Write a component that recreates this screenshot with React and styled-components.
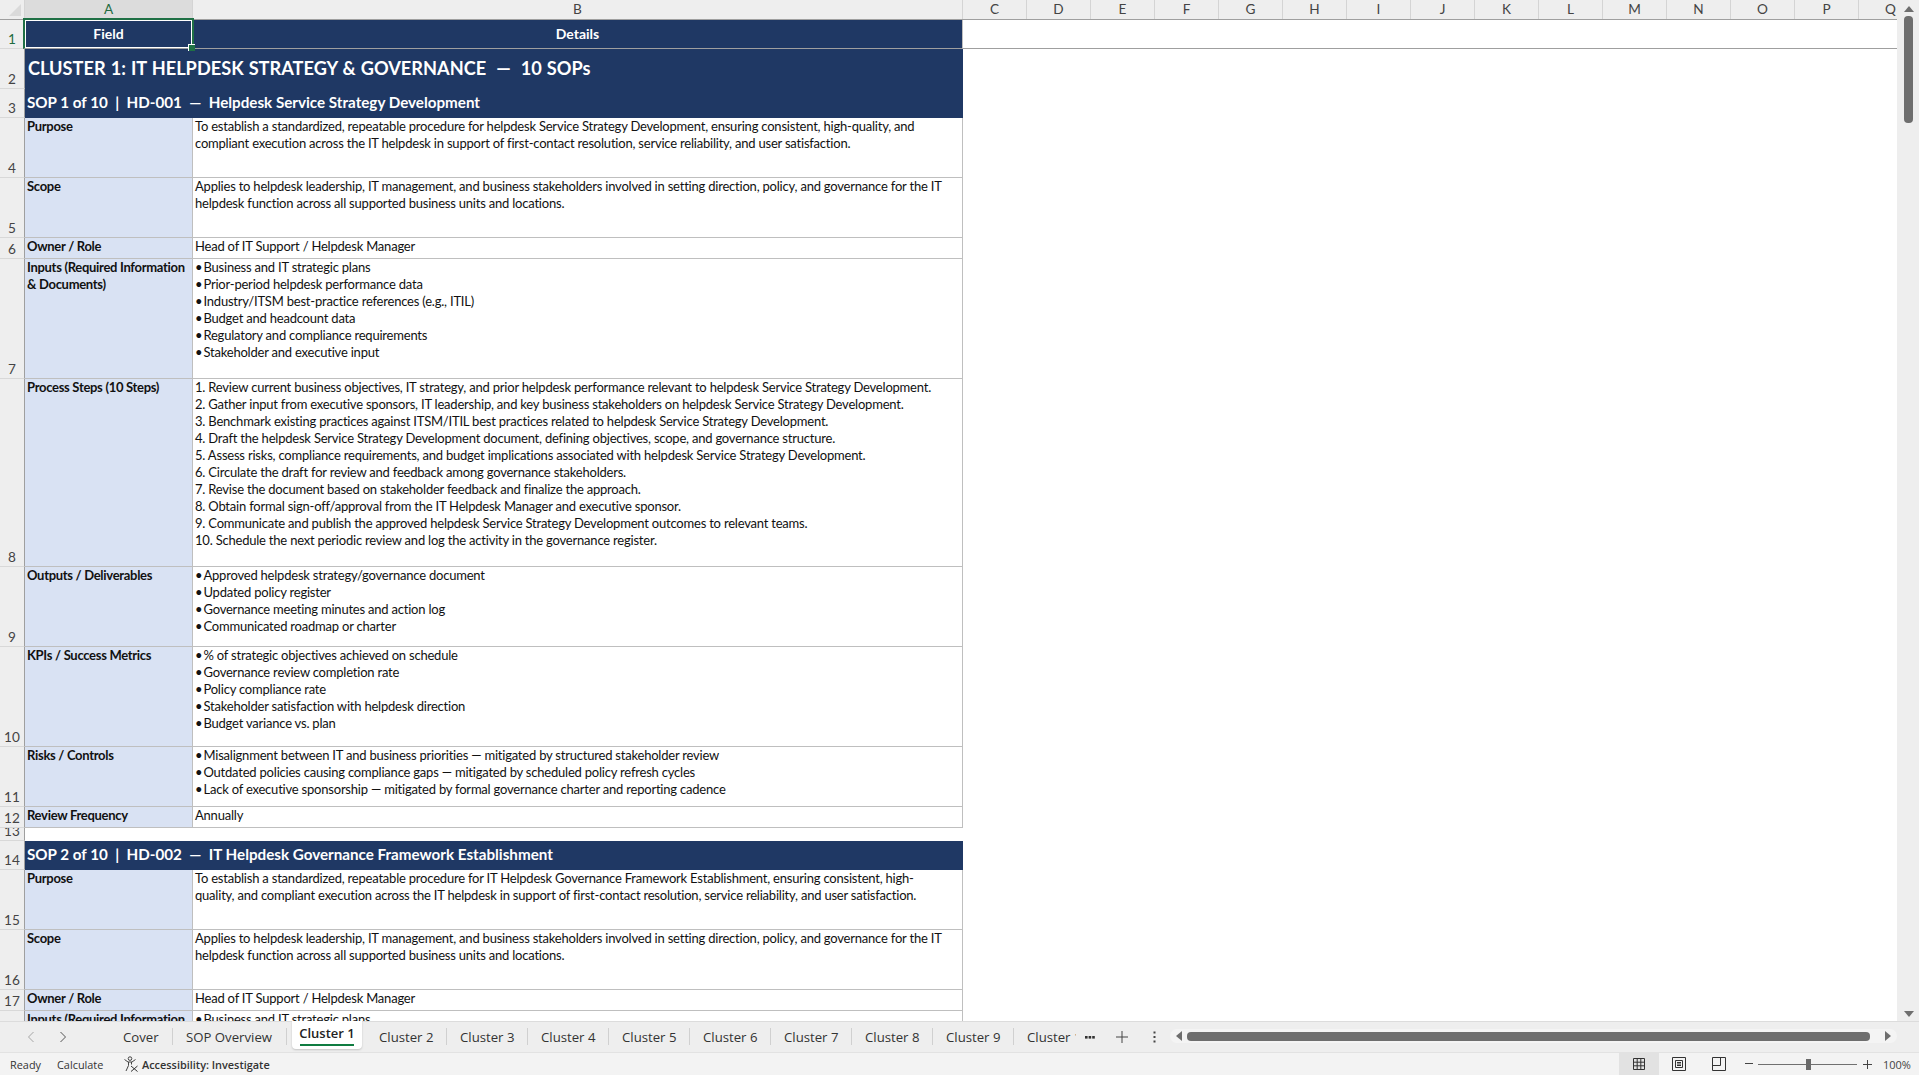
import React from 'react';
import styled, { createGlobalStyle } from 'styled-components';

const GlobalStyle = createGlobalStyle`
  html, body { margin: 0; padding: 0; height: 100%; overflow: hidden; background: #fff; }
  * { box-sizing: border-box; }
  #root { height: 100%; }
`;

const CELL_FONT = `Lato, "Liberation Sans", sans-serif`;
const UI_FONT = `"Open Sans", "Noto Sans", sans-serif`;
const NAVY = '#1f3864';
const LABEL_BG = '#d9e2f3';
const LINE = '#bfbfbf';

const Window = styled.div`
  display: flex;
  flex-direction: column;
  height: 1075px;
  width: 1919px;
  background: #f3f3f3;
`;

const Workspace = styled.div`
  display: flex;
  height: 1021px;
  flex: none;
`;

const SheetArea = styled.div`
  position: relative;
  width: 1897px;
  flex: none;
  display: flex;
  flex-direction: column;
  overflow: hidden;
  background: #fff;
  font-family: ${CELL_FONT};
  font-size: 13px;
  letter-spacing: -0.21px;
  line-height: 17px;
  color: #111;
`;

const ColumnBar = styled.div`
  display: flex;
  height: 20px;
  flex: none;
  background: #eeeeee;
  border-bottom: 1px solid #9f9f9f;
`;

const Corner = styled.div`
  width: 25px;
  flex: none;
  position: relative;
  border-right: 1px solid #d4d4d4;
  &::after {
    content: '';
    position: absolute;
    right: 3px;
    bottom: 3px;
    border-style: solid;
    border-width: 0 0 12px 12px;
    border-color: transparent transparent #dadada transparent;
  }
`;

const ColumnHead = styled.div`
  width: ${p => p.$w}px;
  flex: none;
  text-align: center;
  line-height: 19px;
  font-size: 13.6px;
  letter-spacing: 0;
  color: ${p => (p.$active ? '#1f6b3f' : '#444')};
  background: ${p => (p.$active ? '#dcdcdc' : 'transparent')};
  border-right: 1px solid #d4d4d4;
`;

const Rows = styled.div`
  flex: 1;
  overflow: hidden;
`;

const Row = styled.div`
  display: grid;
  grid-template-columns: 25px 168px 770px 1fr;
  height: ${p => p.$h}px;
`;

const RowHead = styled.div`
  display: flex;
  align-items: flex-end;
  justify-content: center;
  height: 100%;
  padding-bottom: 1px;
  background: #eeeeee;
  border-right: 1px solid #9f9f9f;
  border-bottom: 1px solid #d8d8d8;
  font-size: 13.6px;
  letter-spacing: 0;
  line-height: 16px;
  color: ${p => (p.$active ? '#1f6b3f' : '#444')};
  overflow: hidden;
`;

const Header = styled.div`
  background: ${NAVY};
  color: #fff;
  font-weight: 700;
  font-size: 14px;
  letter-spacing: 0;
  text-align: center;
  line-height: 27px;
  border-bottom: 1px solid #9f9f9f;
  border-right: 1px solid ${LINE};
`;

const HeaderRest = styled.div`
  border-bottom: 1px solid #9f9f9f;
`;

const Title = styled.div`
  grid-column: 2 / 4;
  background: ${NAVY};
  color: #fff;
  font-weight: 700;
  font-size: 18.2px;
  letter-spacing: 0;
  word-spacing: 0.6px;
  line-height: 39px;
  padding-left: 3px;
  white-space: pre;
`;

const SopBar = styled.div`
  grid-column: 2 / 4;
  background: ${NAVY};
  color: #fff;
  font-weight: 700;
  font-size: 15.2px;
  letter-spacing: 0;
  line-height: 27px;
  padding-left: 2px;
  white-space: pre;
`;

const Label = styled.div`
  background: ${LABEL_BG};
  font-weight: 700;
  letter-spacing: -0.3px;
  padding: 0 2px;
  border-right: 1px solid ${LINE};
  border-bottom: 1px solid ${LINE};
  white-space: pre;
  overflow: hidden;
`;

const Value = styled.div`
  padding: 0 2px;
  border-right: 1px solid ${LINE};
  border-bottom: 1px solid ${LINE};
  white-space: pre;
  overflow: hidden;
`;

const Bullet = styled.span`
  margin-right: -2px;
`;

const Selection = styled.div`
  position: absolute;
  left: 23px;
  top: 18px;
  width: 171px;
  height: 31px;
  border: 2px solid #1f7045;
  border-bottom: 1px solid #9f9f9f;
  box-shadow: inset 0 0 0 1px #fff;
  pointer-events: none;
  &::after {
    content: '';
    position: absolute;
    right: -3px;
    bottom: -3px;
    width: 6px;
    height: 6px;
    background: #1f7045;
    border: 1px solid #fff;
    border-right: 0;
    border-bottom: 0;
  }
`;

const VScroll = styled.div`
  flex: 1;
  display: flex;
  flex-direction: column;
  align-items: center;
  background: #eeeeee;
  padding: 5px 0 3px 1px;
`;

const VThumb = styled.div`
  width: 9px;
  height: 107px;
  margin-top: 3px;
  border-radius: 4px;
  background: #6e6e6e;
  flex: none;
`;

const Spacer = styled.div`
  flex: 1;
`;

const TabBar = styled.div`
  height: 32px;
  flex: none;
  display: flex;
  align-items: stretch;
  background: #eeeeee;
  border-top: 1px solid #dcdcdc;
  border-bottom: 1px solid #e2e2e2;
  font-family: ${UI_FONT};
  font-size: 13.2px;
  color: #333;
`;

const TabNav = styled.div`
  width: 110px;
  flex: none;
  display: flex;
  align-items: center;
  padding-left: 27px;
  gap: 24px;
`;

const Tab = styled.div`
  flex: none;
  width: ${p => p.$w}px;
  padding: 0 0 0 13px;
  display: flex;
  align-items: center;
  white-space: nowrap;
  overflow: hidden;
  position: relative;
  &::after {
    content: '';
    position: absolute;
    right: 0;
    top: 6px;
    bottom: 7px;
    width: 1px;
    background: ${p => (p.$plain ? 'transparent' : '#d0d0d0')};
  }
`;

const ActiveTab = styled.div`
  flex: none;
  width: 70px;
  height: 28px;
  margin: -1px 4px 0 5px;
  padding-top: 3px;
  background: #fff;
  border-radius: 0 0 4px 4px;
  box-shadow: 0 1px 2px rgba(0, 0, 0, 0.18);
  text-align: center;
  font-weight: 600;
  font-size: 13px;
  line-height: 18px;
  color: #222;
`;

const ActiveLine = styled.div`
  width: 54px;
  height: 2px;
  margin: 2px auto 0;
  background: #107c41;
`;

const TabTools = styled.div`
  flex: none;
  width: 94px;
  display: flex;
  align-items: center;
  padding-left: 1px;
`;

const ToolSlot = styled.div`
  width: ${p => p.$w}px;
  flex: none;
  display: flex;
  justify-content: center;
  align-items: center;
`;

const HTrack = styled.div`
  flex: none;
  width: 727px;
  height: 14px;
  margin-top: 7px;
  padding: 0 5px;
  display: flex;
  align-items: center;
  gap: 4px;
  border-radius: 7px;
  background: #f4f4f4;
`;

const HThumb = styled.div`
  flex: 1;
  height: 9px;
  border-radius: 4px;
  background: #6e6e6e;
  margin-right: 10px;
`;

const StatusBar = styled.div`
  flex: 1;
  display: flex;
  align-items: stretch;
  background: #f3f3f3;
  font-family: ${UI_FONT};
  font-size: 10.9px;
  color: #333;
`;

const StatusText = styled.div`
  flex: none;
  width: ${p => p.$w}px;
  margin-left: ${p => p.$ml || 0}px;
  display: flex;
  align-items: center;
  gap: 3px;
  white-space: nowrap;
  font-weight: ${p => (p.$bold ? 600 : 400)};
`;

const ViewButtons = styled.div`
  margin-left: auto;
  display: flex;
  align-items: stretch;
`;

const ViewButton = styled.div`
  width: 40px;
  flex: none;
  display: flex;
  align-items: center;
  justify-content: center;
  background: ${p => (p.$active ? '#e2e2e2' : 'transparent')};
`;

const Zoom = styled.div`
  width: 180px;
  flex: none;
  display: flex;
  align-items: center;
  font-size: 11px;
`;

const ZoomSign = styled.div`
  width: ${p => p.$w}px;
  flex: none;
  display: flex;
  justify-content: center;
`;

const ZoomTrack = styled.div`
  position: relative;
  width: 99px;
  height: 1px;
  background: #707070;
  flex: none;
  &::after {
    content: '';
    position: absolute;
    left: 48px;
    top: -5px;
    width: 5px;
    height: 11px;
    background: #6a6a6a;
  }
`;

const ZoomValue = styled.div`
  margin-left: 6px;
  color: #444;
`;

const Arrow = ({ dir }) => {
  const pts = {
    up: '0,7 10,7 5,1',
    down: '0,1 10,1 5,7',
    left: '7,0 7,10 1,5',
    right: '1,0 1,10 7,5',
  }[dir];
  const vertical = dir === 'up' || dir === 'down';
  return (
    <svg width={vertical ? 10 : 8} height={vertical ? 8 : 10} viewBox={vertical ? '0 0 10 8' : '0 0 8 10'}>
      <polygon points={pts} fill="#6e6e6e" />
    </svg>
  );
};

const Chevron = ({ left }) => (
  <svg width="8" height="12" viewBox="0 0 8 12" fill="none" stroke={left ? '#a6a6a6' : '#555'} strokeWidth="1">
    <path d={left ? 'M6.5 1 L1.5 6 L6.5 11' : 'M1.5 1 L6.5 6 L1.5 11'} />
  </svg>
);

const AccessIcon = () => (
  <svg width="16" height="16" viewBox="0 0 16 16" fill="none" stroke="#444" strokeWidth="1">
    <circle cx="7" cy="2.6" r="1.8" />
    <path d="M1.5 3.5 L5 6 H9 L12.5 3.5 M5.5 6 V9.5 L3 15 M8.5 6 V8.5" />
    <path d="M8 10 L14.5 15.5 M14.5 10 L8 15.5" stroke="#333" />
  </svg>
);

const GridIcon = () => (
  <svg width="14" height="14" viewBox="0 0 14 14" fill="none" stroke="#333" strokeWidth="1">
    <path d="M1.5 1.5 H12.5 V12.5 H1.5 Z M1.5 5.2 H12.5 M1.5 8.8 H12.5 M5.2 1.5 V12.5 M8.8 1.5 V12.5" />
  </svg>
);

const PageIcon = () => (
  <svg width="14" height="14" viewBox="0 0 14 14" fill="none" stroke="#333" strokeWidth="1">
    <path d="M0.5 0.5 H13.5 V13.5 H0.5 Z M3.5 3.5 H10.5 V10.5 H3.5 Z M5 5.5 H9 M5 7 H9 M5 8.5 H9" />
  </svg>
);

const BreakIcon = () => (
  <svg width="14" height="14" viewBox="0 0 14 14" fill="none" stroke="#333" strokeWidth="1">
    <path d="M0.5 0.5 H13.5 V13.5 H0.5 Z M0.5 8.5 H8.5 V0.5" />
  </svg>
);

const Dots = () => (
  <svg width="10" height="4" viewBox="0 0 10 4" fill="#333">
    <rect x="0" y="1" width="2.6" height="2.6" />
    <rect x="3.6" y="1" width="2.6" height="2.6" />
    <rect x="7.2" y="1" width="2.6" height="2.6" />
  </svg>
);

const Kebab = () => (
  <svg width="3" height="12" viewBox="0 0 3 12" fill="#444">
    <rect x="0.5" y="0.5" width="2" height="2" />
    <rect x="0.5" y="5" width="2" height="2" />
    <rect x="0.5" y="9.5" width="2" height="2" />
  </svg>
);

const Plus = () => (
  <svg width="12" height="12" viewBox="0 0 12 12" stroke="#444" strokeWidth="1">
    <path d="M0 6 H12 M6 0 V12" />
  </svg>
);

// bullet lines sit tighter in the sheet than a plain space gives
const CellLines = ({ text }) =>
  text.split('\n').map((line, i) => (
    <div key={i}>
      {line.startsWith('• ') ? (
        <>
          <Bullet>• </Bullet>
          {line.slice(2)}
        </>
      ) : (
        line
      )}
    </div>
  ));

const PURPOSE_1 = 'To establish a standardized, repeatable procedure for helpdesk Service Strategy Development, ensuring consistent, high-quality, and\ncompliant execution across the IT helpdesk in support of first-contact resolution, service reliability, and user satisfaction.';
const PURPOSE_2 = 'To establish a standardized, repeatable procedure for IT Helpdesk Governance Framework Establishment, ensuring consistent, high-\nquality, and compliant execution across the IT helpdesk in support of first-contact resolution, service reliability, and user satisfaction.';
const SCOPE = 'Applies to helpdesk leadership, IT management, and business stakeholders involved in setting direction, policy, and governance for the IT\nhelpdesk function across all supported business units and locations.';
const OWNER = 'Head of IT Support / Helpdesk Manager';
const INPUTS_LABEL = 'Inputs (Required Information\n& Documents)';
const INPUTS = [
  '• Business and IT strategic plans',
  '• Prior-period helpdesk performance data',
  '• Industry/ITSM best-practice references (e.g., ITIL)',
  '• Budget and headcount data',
  '• Regulatory and compliance requirements',
  '• Stakeholder and executive input',
].join('\n');
const STEPS = [
  '1. Review current business objectives, IT strategy, and prior helpdesk performance relevant to helpdesk Service Strategy Development.',
  '2. Gather input from executive sponsors, IT leadership, and key business stakeholders on helpdesk Service Strategy Development.',
  '3. Benchmark existing practices against ITSM/ITIL best practices related to helpdesk Service Strategy Development.',
  '4. Draft the helpdesk Service Strategy Development document, defining objectives, scope, and governance structure.',
  '5. Assess risks, compliance requirements, and budget implications associated with helpdesk Service Strategy Development.',
  '6. Circulate the draft for review and feedback among governance stakeholders.',
  '7. Revise the document based on stakeholder feedback and finalize the approach.',
  '8. Obtain formal sign-off/approval from the IT Helpdesk Manager and executive sponsor.',
  '9. Communicate and publish the approved helpdesk Service Strategy Development outcomes to relevant teams.',
  '10. Schedule the next periodic review and log the activity in the governance register.',
].join('\n');
const OUTPUTS = [
  '• Approved helpdesk strategy/governance document',
  '• Updated policy register',
  '• Governance meeting minutes and action log',
  '• Communicated roadmap or charter',
].join('\n');
const KPIS = [
  '• % of strategic objectives achieved on schedule',
  '• Governance review completion rate',
  '• Policy compliance rate',
  '• Stakeholder satisfaction with helpdesk direction',
  '• Budget variance vs. plan',
].join('\n');
const RISKS = [
  '• Misalignment between IT and business priorities — mitigated by structured stakeholder review',
  '• Outdated policies causing compliance gaps — mitigated by scheduled policy refresh cycles',
  '• Lack of executive sponsorship — mitigated by formal governance charter and reporting cadence',
].join('\n');

const ROWS = [
  { n: 3, h: 29, sop: 'SOP 1 of 10  |  HD-001  —  Helpdesk Service Strategy Development' },
  { n: 4, h: 60, label: 'Purpose', value: PURPOSE_1 },
  { n: 5, h: 60, label: 'Scope', value: SCOPE },
  { n: 6, h: 21, label: 'Owner / Role', value: OWNER },
  { n: 7, h: 120, label: INPUTS_LABEL, value: INPUTS },
  { n: 8, h: 188, label: 'Process Steps (10 Steps)', value: STEPS },
  { n: 9, h: 80, label: 'Outputs / Deliverables', value: OUTPUTS },
  { n: 10, h: 100, label: 'KPIs / Success Metrics', value: KPIS },
  { n: 11, h: 60, label: 'Risks / Controls', value: RISKS },
  { n: 12, h: 21, label: 'Review Frequency', value: 'Annually' },
  { n: 13, h: 13 },
  { n: 14, h: 29, sop: 'SOP 2 of 10  |  HD-002  —  IT Helpdesk Governance Framework Establishment' },
  { n: 15, h: 60, label: 'Purpose', value: PURPOSE_2 },
  { n: 16, h: 60, label: 'Scope', value: SCOPE },
  { n: 17, h: 21, label: 'Owner / Role', value: OWNER },
  { n: 18, h: 120, label: INPUTS_LABEL, value: INPUTS, hideNumber: true },
];

const LETTERS = 'CDEFGHIJKLMNOPQ'.split('');
const CLUSTER_TABS = ['Cluster 2', 'Cluster 3', 'Cluster 4', 'Cluster 5', 'Cluster 6', 'Cluster 7', 'Cluster 8', 'Cluster 9'];

const App = () => (
  <>
    <GlobalStyle />
    <Window>
      <Workspace>
        <SheetArea>
          <ColumnBar>
            <Corner />
            <ColumnHead $w={168} $active>A</ColumnHead>
            <ColumnHead $w={770}>B</ColumnHead>
            {LETTERS.map(l => (
              <ColumnHead key={l} $w={64}>{l}</ColumnHead>
            ))}
          </ColumnBar>
          <Rows>
            <Row $h={29}>
              <RowHead $active>1</RowHead>
              <Header>Field</Header>
              <Header>Details</Header>
              <HeaderRest />
            </Row>
            <Row $h={40}>
              <RowHead>2</RowHead>
              <Title>CLUSTER 1: IT HELPDESK STRATEGY &amp; GOVERNANCE  —  10 SOPs</Title>
            </Row>
            {ROWS.map(r => (
              <Row key={r.n} $h={r.h}>
                <RowHead>{r.hideNumber ? '' : r.n}</RowHead>
                {r.sop && <SopBar>{r.sop}</SopBar>}
                {r.label && <Label>{r.label}</Label>}
                {r.label && (
                  <Value>
                    <CellLines text={r.value} />
                  </Value>
                )}
              </Row>
            ))}
          </Rows>
          <Selection />
        </SheetArea>
        <VScroll>
          <Arrow dir="up" />
          <VThumb />
          <Spacer />
          <Arrow dir="down" />
        </VScroll>
      </Workspace>
      <TabBar>
        <TabNav>
          <Chevron left />
          <Chevron />
        </TabNav>
        <Tab $w={63}>Cover</Tab>
        <Tab $w={114}>SOP Overview</Tab>
        <ActiveTab>
          Cluster 1
          <ActiveLine />
        </ActiveTab>
        {CLUSTER_TABS.map(t => (
          <Tab key={t} $w={81}>{t}</Tab>
        ))}
        <Tab $w={62} $plain>Cluster 10</Tab>
        <TabTools>
          <ToolSlot $w={26}><Dots /></ToolSlot>
          <ToolSlot $w={38}><Plus /></ToolSlot>
          <ToolSlot $w={27}><Kebab /></ToolSlot>
        </TabTools>
        <HTrack>
          <Arrow dir="left" />
          <HThumb />
          <Arrow dir="right" />
        </HTrack>
      </TabBar>
      <StatusBar>
        <StatusText $w={47} $ml={10}>Ready</StatusText>
        <StatusText $w={66}>Calculate</StatusText>
        <StatusText $w={170} $bold><AccessIcon />Accessibility: Investigate</StatusText>
        <ViewButtons>
          <ViewButton $active><GridIcon /></ViewButton>
          <ViewButton><PageIcon /></ViewButton>
          <ViewButton><BreakIcon /></ViewButton>
        </ViewButtons>
        <Zoom>
          <ZoomSign $w={19}>
            <svg width="8" height="2" viewBox="0 0 8 2"><rect width="8" height="1" fill="#444" /></svg>
          </ZoomSign>
          <ZoomTrack />
          <ZoomSign $w={20}>
            <svg width="9" height="9" viewBox="0 0 9 9" stroke="#444"><path d="M0 4.5 H9 M4.5 0 V9" /></svg>
          </ZoomSign>
          <ZoomValue>100%</ZoomValue>
        </Zoom>
      </StatusBar>
    </Window>
  </>
);

export default App;
